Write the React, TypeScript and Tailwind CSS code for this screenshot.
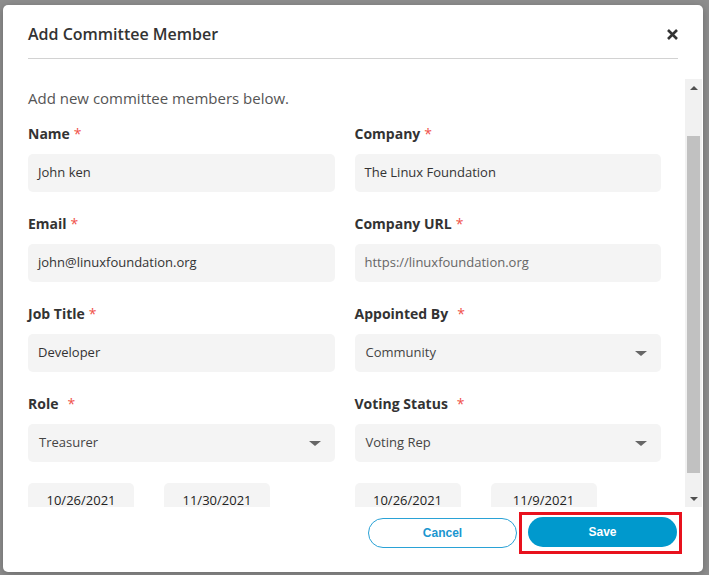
import React from "react"

type FieldProps = {
  label: string
  wide?: boolean
  children: React.ReactNode
}

function Field({ label, wide, children }: FieldProps) {
  return (
    <div className="flex flex-col">
      <div className="mb-[10px] flex h-5 translate-y-px items-center text-[14px] font-bold leading-5 text-[#333]">
        {label}
        <span className={wide ? "ml-[9px] font-normal text-[#f0514a]" : "ml-[4px] font-normal text-[#f0514a]"}>*</span>
      </div>
      <div className="mt-px">{children}</div>
    </div>
  )
}

function TextBox({ value, muted }: { value: string; muted?: boolean }) {
  return (
    <div
      className={`flex h-[38px] items-center rounded-[5px] bg-[#f4f4f4] px-[10px] text-[13px] ${
        muted ? "text-[#666]" : "text-[#333]"
      }`}
    >
      {value}
    </div>
  )
}

function SelectBox({ value }: { value: string }) {
  return (
    <div className="flex h-[38px] items-center justify-between rounded-[5px] bg-[#f4f4f4] pl-[11px] pr-[14px] text-[13px] text-[#444]">
      <span>{value}</span>
      <span className="h-0 w-0 border-x-[6px] border-t-[5px] border-x-transparent border-t-[#666]" />
    </div>
  )
}

function DateBox({ value }: { value: string }) {
  return (
    <div className="flex h-[38px] w-[106px] justify-center rounded-[5px] bg-[#f4f4f4] pt-[8px] text-[13px] leading-[18px] text-[#222]">
      {value}
    </div>
  )
}

export default function App() {
  return (
    <div className="h-[575px] w-[709px] overflow-hidden bg-[#8e8e8e] pl-[3px] pt-[5px] font-['Open_Sans',sans-serif]">
      <div className="flex h-[567px] w-[700px] flex-col rounded-[5px] bg-white shadow-[0_2px_8px_rgba(0,0,0,0.25)]">
        {/* header */}
        <div className="px-[25px] pt-[18px]">
          <div className="flex h-[22px] items-center justify-between">
            <h2 className="text-[16px] font-semibold leading-[22px] text-[#333]">Add Committee Member</h2>
            <svg width="11" height="11" viewBox="0 0 11 11">
              <path d="M1 1 L10 10 M10 1 L1 10" stroke="#333" strokeWidth="2.6" />
            </svg>
          </div>
          <div className="mt-[13px] h-px bg-[#d2d2d2]" />
        </div>

        {/* scrolled body */}
        <div className="mt-[20px] flex h-[428px]">
          <div className="flex-1 overflow-hidden pl-[25px] pr-[24px] pt-[9px]">
            <p className="text-[15px] leading-5 text-[#555]">Add new committee members below.</p>
            <div className="mt-[15px] grid grid-cols-2 gap-x-[20px] gap-y-[21px]">
              <Field label="Name">
                <TextBox value="John ken" />
              </Field>
              <Field label="Company">
                <TextBox value="The Linux Foundation" />
              </Field>
              <Field label="Email">
                <TextBox value="john@linuxfoundation.org" />
              </Field>
              <Field label="Company URL">
                <TextBox value="https://linuxfoundation.org" muted />
              </Field>
              <Field label="Job Title">
                <TextBox value="Developer" />
              </Field>
              <Field label="Appointed By" wide>
                <SelectBox value="Community" />
              </Field>
              <Field label="Role" wide>
                <SelectBox value="Treasurer" />
              </Field>
              <Field label="Voting Status" wide>
                <SelectBox value="Voting Rep" />
              </Field>
              <div className="flex gap-[30px]">
                <DateBox value="10/26/2021" />
                <DateBox value="11/30/2021" />
              </div>
              <div className="flex gap-[30px]">
                <DateBox value="10/26/2021" />
                <DateBox value="11/9/2021" />
              </div>
            </div>
          </div>

          {/* scrollbar */}
          <div className="mr-px flex w-[17px] flex-col bg-[#f1f1f1]">
            <div className="flex h-[17px] items-center justify-center">
              <span className="h-0 w-0 border-x-[4px] border-b-[4px] border-x-transparent border-b-[#505050]" />
            </div>
            <div className="flex-1">
              <div className="mx-[2px] mt-[40px] h-[337px] bg-[#c1c1c1]" />
            </div>
            <div className="flex h-[17px] items-center justify-center">
              <span className="h-0 w-0 border-x-[4px] border-t-[4px] border-x-transparent border-t-[#505050]" />
            </div>
          </div>
        </div>

        {/* footer */}
        <div className="flex items-center justify-end gap-[2px] pr-[21px] pt-[5px] font-['Liberation_Sans',Arial,sans-serif]">
          <button className="h-[30px] w-[149px] rounded-full border border-[#2aa2d6] bg-white text-[12px] font-bold text-[#1a96cf]">
            Cancel
          </button>
          <div className="border-[3px] border-[#e8111d] pb-[4px] pl-[6px] pr-[2px] pt-[2px]">
            <button className="h-[30px] w-[149px] rounded-full bg-[#0099cd] text-[12px] font-bold text-white">
              Save
            </button>
          </div>
        </div>
      </div>
    </div>
  )
}
